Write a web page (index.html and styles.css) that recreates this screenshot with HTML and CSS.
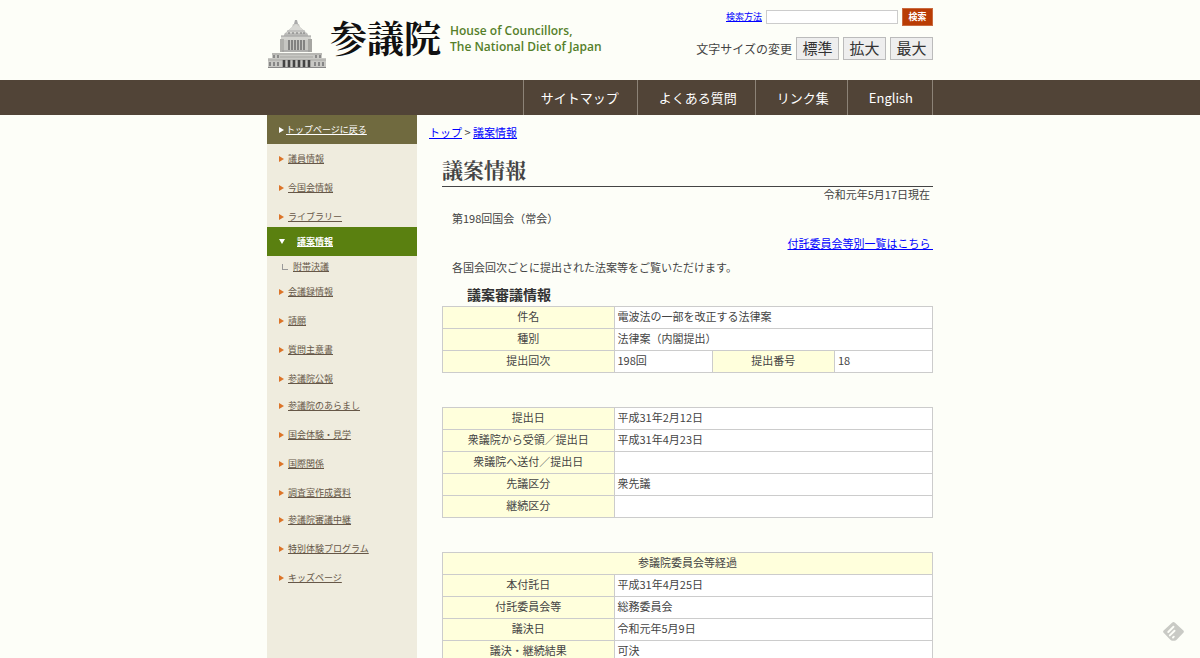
FILE: index.html
```html
<!DOCTYPE html>
<html lang="ja">
<head>
    <meta charset="UTF-8">
    <meta name="viewport" content="width=device-width, initial-scale=1.0">
    <title>議案情報：参議院</title>
    <link rel="stylesheet" href="styles.css">
</head>
<body>
    <header class="header container">
        <a class="logo" href="#">
            <svg class="logo-building" viewBox="0 0 60 50" aria-hidden="true">
                <path d="M28 1h2l1 4h-4z" fill="#aaa"/>
                <path d="M26 5h6l1 3 8 7v2H17v-2l8-7z" fill="#c8c8c4"/>
                <path d="M24 9l5-4 6 5 5 5H19z" fill="#d8d8d4"/>
                <path d="M20 12h18M18 15h22" stroke="#aaa" stroke-width="1"/>
                <path d="M22 13v2M26 13v2M30 13v2M34 13v2M37 13v2" stroke="#777" stroke-width="1"/>
                <rect x="14" y="17" width="30" height="4" fill="#d2d2ce"/>
                <rect x="15" y="21" width="28" height="12" fill="#c6c6c2"/>
                <rect x="13" y="20" width="4" height="13" fill="#b0b0ac"/>
                <rect x="41" y="20" width="4" height="13" fill="#a6a6a2"/>
                <path d="M22 21v10M25 21v10M28 21v10M31 21v10M34 21v10M37 21v10" stroke="#666" stroke-width="1.4"/>
                <path d="M14 17h30M15 32h28" stroke="#999" stroke-width="1"/>
                <path d="M5 34h50v5h4v10H1V39h4z" fill="#c8c8c4"/>
                <path d="M5 35h50M13 38h33M1 41h58" stroke="#a6a6a2" stroke-width="1"/>
                <path d="M7 36v3M11 36v3M49 36v3M53 36v3" stroke="#777" stroke-width="1.5"/>
                <path d="M17 41v7M22 41v7M27 41v7M32 41v7M37 41v7M42 41v7" stroke="#444" stroke-width="2.6"/>
                <path d="M3 43v4M7 43v4M11 43v4M48 43v4M52 43v4M56 43v4" stroke="#777" stroke-width="1.6"/>
                <path d="M1 48.500h58" stroke="#888" stroke-width="1"/>
            </svg>
            <span class="logo-name">参議院</span>
            <span class="logo-english">House of Councillors,<br>The National Diet of Japan</span>
        </a>
        <div class="tools">
            <form class="search">
                <a class="search-help" href="#">検索方法</a>
                <input class="search-input" type="text" aria-label="検索">
                <button class="search-button" type="submit">検索</button>
            </form>
            <div class="font-size">
                <span>文字サイズの変更</span>
                <button class="size-button" type="button">標準</button>
                <button class="size-button" type="button">拡大</button>
                <button class="size-button" type="button">最大</button>
            </div>
        </div>
    </header>

    <nav class="global-nav">
        <ul class="nav-list container">
            <li><a href="#">サイトマップ</a></li>
            <li><a href="#">よくある質問</a></li>
            <li><a href="#">リンク集</a></li>
            <li><a href="#">English</a></li>
        </ul>
    </nav>

    <div class="page container">
        <aside class="sidebar">
            <a class="back-top" href="#"><span>トップページに戻る</span></a>
            <ul class="side-group before-current">
                <li><a href="#">議員情報</a></li>
                <li><a href="#">今国会情報</a></li>
                <li><a href="#">ライブラリー</a></li>
            </ul>
            <a class="current" href="#"><span>議案情報</span></a>
            <div class="sub-item"><a href="#">附帯決議</a></div>
            <ul class="side-group">
                <li><a href="#">会議録情報</a></li>
                <li><a href="#">請願</a></li>
                <li><a href="#">質問主意書</a></li>
                <li><a href="#">参議院公報</a></li>
            </ul>
            <ul class="side-group">
                <li><a href="#">参議院のあらまし</a></li>
                <li><a href="#">国会体験・見学</a></li>
                <li><a href="#">国際関係</a></li>
                <li><a href="#">調査室作成資料</a></li>
            </ul>
            <ul class="side-group">
                <li><a href="#">参議院審議中継</a></li>
                <li><a href="#">特別体験プログラム</a></li>
                <li><a href="#">キッズページ</a></li>
            </ul>
        </aside>

        <main class="main">
            <p class="breadcrumb"><a href="#">トップ</a> &gt; <a href="#">議案情報</a></p>
            <div class="content">
                <h1>議案情報</h1>
                <p class="date">令和元年5月17日現在</p>
                <p class="session">第198回国会（常会）</p>
                <p class="list-link"><a href="#">付託委員会等別一覧はこちら&nbsp;</a></p>
                <p class="lead">各国会回次ごとに提出された法案等をご覧いただけます。</p>
                <h2>議案審議情報</h2>
                <table>
                    <colgroup><col class="col-head"><col class="col-value"><col class="col-number"><col class="col-value"></colgroup>
                    <tr><th scope="row">件名</th><td colspan="3">電波法の一部を改正する法律案</td></tr>
                    <tr><th scope="row">種別</th><td colspan="3">法律案（内閣提出）</td></tr>
                    <tr><th scope="row">提出回次</th><td>198回</td><th scope="row">提出番号</th><td>18</td></tr>
                </table>
                <table>
                    <colgroup><col class="col-head"><col></colgroup>
                    <tr><th scope="row">提出日</th><td>平成31年2月12日</td></tr>
                    <tr><th scope="row">衆議院から受領／提出日</th><td>平成31年4月23日</td></tr>
                    <tr><th scope="row">衆議院へ送付／提出日</th><td></td></tr>
                    <tr><th scope="row">先議区分</th><td>衆先議</td></tr>
                    <tr><th scope="row">継続区分</th><td></td></tr>
                </table>
                <table>
                    <colgroup><col class="col-head"><col></colgroup>
                    <tr><th colspan="2">参議院委員会等経過</th></tr>
                    <tr><th scope="row">本付託日</th><td>平成31年4月25日</td></tr>
                    <tr><th scope="row">付託委員会等</th><td>総務委員会</td></tr>
                    <tr><th scope="row">議決日</th><td>令和元年5月9日</td></tr>
                    <tr><th scope="row">議決・継続結果</th><td>可決</td></tr>
                </table>
            </div>
        </main>
    </div>

    <button class="feed-button" type="button" aria-label="feed">
        <svg viewBox="0 0 20 18" aria-hidden="true">
            <path d="M8.6.6q1.4-1.2 2.8 0l8 7.6q1 1 0 2L13 17q-.8.8-2 .8H9q-1.200 0-2-.8L.6 10.200q-1-1 0-2z" fill="#c9cac5"/>
            <path d="M5 9.500l5-5M6.500 12.800l4.500-4.500M9.500 14.800l.8-.8" stroke="#fdfef8" stroke-width="1.800" stroke-linecap="round"/>
        </svg>
    </button>
</body>
</html>
```

FILE: styles.css
```css
* {
    box-sizing: border-box;
}
body {
    margin: 0;
    background: #fdfef8;
    color: #444;
    font-family: "Noto Sans CJK JP", sans-serif;
    font-size: 11px;
    line-height: 16px;
}
h1, h2, p, ul {
    margin: 0;
    padding: 0;
}
ul {
    list-style: none;
}
a {
    color: #00f;
}
button, input {
    font-family: inherit;
    border-radius: 0;
    margin: 0;
}
.container {
    max-width: 666px;
    margin: 0 auto;
}

/* header */
.header {
    display: flex;
    justify-content: space-between;
    height: 80px;
}
.logo {
    display: flex;
    align-items: flex-start;
    padding-top: 19px;
    text-decoration: none;
}
.logo-building {
    width: 60px;
    height: 50px;
}
.logo-name {
    margin: 0 9px 0 3px;
    color: #111;
    font-family: "Noto Serif CJK JP", "Noto Sans CJK JP", serif;
    font-size: 37px;
    font-weight: bold;
    line-height: 36px;
}
.logo-english {
    padding-top: 4px;
    color: #55802a;
    font-family: "Open Sans", sans-serif;
    font-size: 12px;
    font-weight: 600;
    line-height: 16px;
}
.tools {
    padding-top: 8px;
}
.search, .font-size {
    display: flex;
    align-items: center;
    justify-content: flex-end;
    gap: 4px;
}
.search-help {
    font-size: 9px;
}
.search-input {
    width: 132px;
    height: 14px;
    border: 1px solid #ccc;
    background: #fff;
}
.search-button {
    width: 31px;
    height: 18px;
    padding: 0;
    border: 1px solid #c96a40;
    background: #b93c04;
    color: #fff;
    font-size: 9px;
    font-weight: bold;
    line-height: 14px;
}
.font-size {
    margin-top: 11px;
    font-size: 12px;
}
.size-button {
    width: 43px;
    height: 23px;
    padding: 0 0 2px;
    border: 1px solid #bbb;
    background: #eee;
    color: #333;
    font-size: 15px;
    line-height: 19px;
}

/* global nav */
.global-nav {
    background: #514437;
}
.nav-list {
    display: flex;
    justify-content: flex-end;
}
.nav-list li {
    border-left: 1px solid #8c8377;
}
.nav-list li:last-child {
    border-right: 1px solid #8c8377;
}
.nav-list a {
    display: block;
    padding: 0 18px 0 21px;
    color: #fff;
    font-size: 13px;
    line-height: 35px;
    text-decoration: none;
}
.nav-list li:first-child a {
    padding-left: 17px;
}
.nav-list li:last-child a {
    padding-right: 19px;
}

/* side menu */
.page {
    display: flex;
    align-items: stretch;
}
.sidebar {
    flex: 0 0 150px;
    background: #efecde;
    font-size: 9px;
}
.sidebar a {
    color: #665747;
}
.sidebar .back-top, .sidebar .current {
    display: flex;
    align-items: center;
    height: 29px;
    padding-left: 12px;
    color: #fff;
}
.back-top {
    background: #706a3f;
}
.back-top::before, .side-group li::before {
    content: "";
    border: 3px solid transparent;
    border-left: 5px solid #dc7428;
    border-right: 0;
}
.back-top::before {
    margin-right: 2px;
    border-left-color: #fff;
}
.sidebar .current {
    background: #5a8010;
    font-weight: bold;
}
.current::before {
    content: "";
    margin-right: 12px;
    border: 3px solid transparent;
    border-top: 5px solid #fff;
    border-bottom: 0;
}
.side-group li {
    display: flex;
    align-items: center;
    height: 29px;
    padding: 1px 0 0 12px;
}
.side-group li::before {
    margin-right: 4px;
}
.side-group li:last-child {
    height: 27px;
    padding-top: 3px;
}
.before-current li:last-child {
    height: 25px;
    padding-top: 5px;
}
.sub-item {
    display: flex;
    align-items: center;
    height: 21px;
    padding-left: 15px;
}
.sub-item::before {
    content: "";
    width: 5px;
    height: 5px;
    margin-right: 5px;
    border-left: 1px solid #999;
    border-bottom: 1px solid #999;
}

/* main */
.main {
    flex: 1;
    padding: 9px 0 0 12px;
}
.content {
    padding-left: 13px;
}
h1 {
    margin-top: 16px;
    padding-bottom: 3px;
    border-bottom: 1px solid #444;
    font-family: "Noto Serif CJK JP", "Noto Sans CJK JP", serif;
    font-size: 21px;
    line-height: 27px;
}
.date {
    padding-right: 3px;
    line-height: 14px;
    text-align: right;
}
.session {
    padding: 9px 10px 0;
}
.list-link {
    padding-top: 9px;
    text-align: right;
}
.lead {
    padding: 8px 10px 0;
}
h2 {
    padding: 9px 0 2px 25px;
    color: #333;
    font-size: 14px;
    line-height: 20px;
}
table {
    width: 100%;
    margin-bottom: 34px;
    border-collapse: collapse;
    table-layout: fixed;
    background: #fff;
}
.col-head {
    width: 35%;
}
.col-value {
    width: 20%;
}
.col-number {
    width: 25%;
}
th, td {
    height: 22px;
    padding: 0 3px 3px;
    border: 1px solid #ccc;
    line-height: 16px;
    text-align: left;
}
th {
    background: #ffffdc;
    font-weight: normal;
    text-align: center;
}
table:last-child {
    margin-bottom: 0;
}

.feed-button {
    position: fixed;
    right: 16px;
    bottom: 17px;
    width: 21px;
    height: 19px;
    padding: 0;
    border: 0;
    background: none;
}
.feed-button svg {
    display: block;
    fill: none;
}
```
